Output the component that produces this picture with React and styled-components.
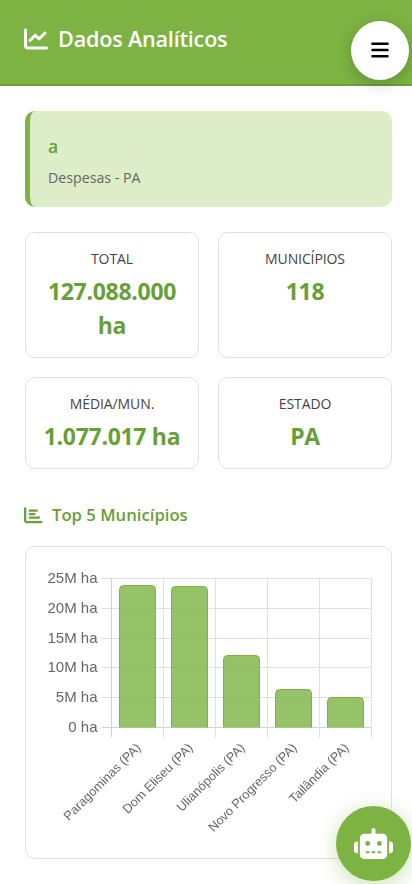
import React from 'react'
import styled, { createGlobalStyle } from 'styled-components'
import { FaChartLine, FaChartBar, FaBars, FaRobot } from 'react-icons/fa6'

const GlobalStyle = createGlobalStyle`
  * { box-sizing: border-box; }
  html, body { margin: 0; padding: 0; background: #fff; }
  body { font-family: "Open Sans", "Noto Sans", sans-serif; color: #333; }
`

const Page = styled.div`
  position: relative;
  width: 412px;
  height: 884px;
  overflow: hidden;
`

const Header = styled.header`
  height: 86px;
  background: #7cb342;
  border-bottom: 2px solid #689f38;
  padding: 23px 24px 0;
`

const Title = styled.h1`
  display: flex;
  align-items: center;
  gap: 10px;
  margin: 0;
  color: #fff;
  font-size: 21.6px;
  line-height: 32px;
  font-weight: 600;
  letter-spacing: -0.2px;
  svg { font-size: 24px; }
`

const MenuButton = styled.button`
  position: absolute;
  top: 21px;
  left: 351px;
  width: 58px;
  height: 59px;
  padding: 0 0 2px;
  border: none;
  border-radius: 50%;
  background: #fff;
  color: #000;
  display: flex;
  align-items: center;
  justify-content: center;
  font-size: 20px;
  box-shadow: 0 4px 15px rgba(0, 0, 0, 0.2);
`

const Main = styled.main`
  padding: 25px 20px 0 25px;
`

const Banner = styled.section`
  height: 96px;
  background: #dcedc8;
  border-left: 5px solid #7cb342;
  border-radius: 10px;
  padding: 24px 18px 0;
`

const BannerTitle = styled.h2`
  margin: 0 0 11px;
  color: #689f38;
  font-size: 17.6px;
  line-height: 23px;
  font-weight: 600;
`

const BannerText = styled.p`
  margin: 0;
  color: #666;
  font-size: 14.2px;
  line-height: 18px;
`

const StatGrid = styled.div`
  display: grid;
  grid-template-columns: 174px 174px;
  grid-template-rows: 126px 92px;
  gap: 19px;
  margin-top: 25px;
`

const StatCard = styled.div`
  border: 1px solid #e0e0e0;
  border-radius: 10px;
  padding: 16px 8px 0;
  text-align: center;
`

const StatLabel = styled.div`
  color: #444;
  font-size: 14px;
  line-height: 20px;
  letter-spacing: -0.1px;
`

const StatValue = styled.div`
  margin-top: 5px;
  color: #689f38;
  font-size: 23px;
  line-height: 34px;
  font-weight: 700;
  letter-spacing: -0.3px;
`

const SectionTitle = styled.h3`
  display: flex;
  align-items: center;
  gap: 9.5px;
  margin: 34px 0 0 -1px;
  color: #689f38;
  font-size: 16.7px;
  line-height: 24px;
  font-weight: 600;
  svg { font-size: 18.5px; }
`

const ChartCard = styled.div`
  height: 313px;
  margin-top: 19px;
  border: 1px solid #e0e0e0;
  border-radius: 10px;
`

const ChartSvg = styled.svg`
  display: block;
  font-family: "Liberation Sans", Arial, sans-serif;
  will-change: transform;
`

const BotButton = styled.button`
  position: absolute;
  left: 336px;
  top: 806px;
  width: 75px;
  height: 75px;
  padding: 0;
  border: none;
  border-radius: 50%;
  background: #7cb342;
  color: #fff;
  display: flex;
  align-items: center;
  justify-content: center;
  font-size: 39px;
  box-shadow: 0 4px 20px rgba(124, 179, 66, 0.4);
`

const stats = [
  ['TOTAL', '127.088.000 ha'],
  ['MUNICÍPIOS', '118'],
  ['MÉDIA/MUN.', '1.077.017 ha'],
  ['ESTADO', 'PA'],
]

// coordinates below are relative to the card's inner corner (26, 547)
const originX = 85.5
const stepX = 52
const baseY = 180.5
const yTicks = [
  ['0 ha', 180.5],
  ['5M ha', 150.5],
  ['10M ha', 120.5],
  ['15M ha', 91.5],
  ['20M ha', 61.5],
  ['25M ha', 31.5],
]
const bars = [
  ['Paragominas (PA)', 38.5],
  ['Dom Eliseu (PA)', 39.5],
  ['Ulianópolis (PA)', 108.5],
  ['Novo Progresso (PA)', 142.5],
  ['Tailândia (PA)', 150.5],
]

const Chart = () => (
  <ChartSvg width="365" height="311" viewBox="0 0 365 311">
    {yTicks.map(([label, y], i) => (
      <g key={label}>
        <line x1={originX - 10} x2={originX + stepX * 5} y1={y} y2={y} stroke={i === 0 ? '#d2d2d2' : '#e0e0e0'} />
        <text x={originX - 14} y={y + 4} textAnchor="end" fontSize="15" fill="#666">{label}</text>
      </g>
    ))}
    {[0, 1, 2, 3, 4, 5].map((i) => (
      <line
        key={i}
        x1={originX + i * stepX}
        x2={originX + i * stepX}
        y1={31.5}
        y2={baseY + 10}
        stroke={i === 0 ? '#d2d2d2' : '#e0e0e0'}
      />
    ))}
    {bars.map(([name, top], i) => {
      const x = originX + i * stepX + 8
      return (
        <g key={name}>
          <path
            d={`M${x} ${baseY}V${top + 4}q0-4 4-4H${x + 32}q4 0 4 4V${baseY}`}
            fill="rgba(124,179,66,0.8)"
            stroke="#7cb342"
          />
          <text
            textAnchor="end"
            fontSize="12.7"
            fill="#666"
            transform={`translate(${originX + i * stepX + 30} ${baseY + 21}) rotate(-45)`}
          >
            {name}
          </text>
        </g>
      )
    })}
  </ChartSvg>
)

export default function App() {
  return (
    <Page>
      <GlobalStyle />
      <Header>
        <Title><FaChartLine />Dados Analíticos</Title>
      </Header>
      <MenuButton aria-label="Menu"><FaBars /></MenuButton>
      <Main>
        <Banner>
          <BannerTitle>a</BannerTitle>
          <BannerText>Despesas - PA</BannerText>
        </Banner>
        <StatGrid>
          {stats.map(([label, value]) => (
            <StatCard key={label}>
              <StatLabel>{label}</StatLabel>
              <StatValue>{value}</StatValue>
            </StatCard>
          ))}
        </StatGrid>
        <SectionTitle><FaChartBar />Top 5 Municípios</SectionTitle>
        <ChartCard><Chart /></ChartCard>
      </Main>
      <BotButton aria-label="Assistente"><FaRobot /></BotButton>
    </Page>
  )
}
